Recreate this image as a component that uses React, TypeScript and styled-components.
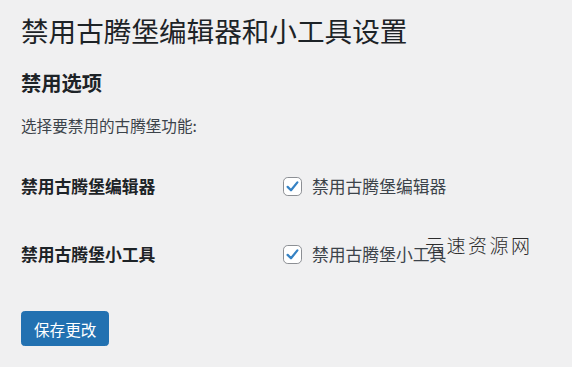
import React from 'react';
import styled, { createGlobalStyle } from 'styled-components';

const GlobalStyle = createGlobalStyle`
  html, body {
    margin: 0;
    padding: 0;
    background: #f0f0f1;
  }
  body {
    font-family: "Noto Sans CJK SC", "Noto Sans", sans-serif;
    color: #1d2327;
  }
`;

const Wrap = styled.div`
  position: relative;
  width: 572px;
  height: 367px;
  padding-left: 21px;
  box-sizing: border-box;
  overflow: hidden;
`;

const Title = styled.h1`
  margin: 12px 0 0;
  font-size: 27.6px;
  line-height: 36px;
  font-weight: 400;
  color: #1d2327;
`;

const SectionTitle = styled.h2`
  margin: 21px 0 0;
  font-size: 20.3px;
  line-height: 26px;
  font-weight: 700;
  color: #1d2327;
`;

const Intro = styled.p`
  margin: 19px 0 0;
  font-size: 15.6px;
  line-height: 22px;
  color: #3c434a;
`;

const FormTable = styled.div`
  margin-top: 16px;
  display: flex;
  flex-direction: column;
`;

const Row = styled.div`
  display: grid;
  grid-template-columns: 262px 1fr;
  align-items: center;
  height: 68px;
`;

const RowLabel = styled.div`
  font-size: 16.8px;
  line-height: 24px;
  font-weight: 700;
  color: #1d2327;
`;

const CheckLabel = styled.label`
  display: flex;
  align-items: center;
  gap: 10px;
  font-size: 16.8px;
  line-height: 24px;
  color: #3c434a;
`;

const Box = styled.span`
  width: 19px;
  height: 19px;
  box-sizing: border-box;
  border: 1.2px solid #8c8f94;
  border-radius: 4.8px;
  background: #fff;
  display: flex;
  align-items: center;
  justify-content: center;
`;

const SaveButton = styled.button`
  margin-top: 23px;
  height: 35px;
  padding: 0 12px;
  background: #2271b1;
  border: 1.2px solid #2271b1;
  border-radius: 3.6px;
  color: #fff;
  font-family: inherit;
  font-size: 15.6px;
  line-height: 32px;
`;

const Watermark = styled.div`
  position: absolute;
  left: 425px;
  top: 232px;
  font-size: 19px;
  line-height: 26px;
  letter-spacing: 2.5px;
  font-weight: 300;
  color: #2c2c2c;
`;

function Checkbox({ label }: { label: string }) {
  return (
    <CheckLabel>
      <Box>
        <svg width="15" height="15" viewBox="0 0 20 20">
          <path d="M3.5 10.5 L8 15 L16.5 4.5" fill="none" stroke="#3582c4" strokeWidth="3" strokeLinecap="round" strokeLinejoin="round" />
        </svg>
      </Box>
      {label}
    </CheckLabel>
  );
}

const options = [
  { title: '禁用古腾堡编辑器', label: '禁用古腾堡编辑器' },
  { title: '禁用古腾堡小工具', label: '禁用古腾堡小工具' },
];

export default function App() {
  return (
    <Wrap>
      <GlobalStyle />
      <Title>禁用古腾堡编辑器和小工具设置</Title>
      <SectionTitle>禁用选项</SectionTitle>
      <Intro>选择要禁用的古腾堡功能:</Intro>
      <FormTable>
        {options.map((o) => (
          <Row key={o.title}>
            <RowLabel>{o.title}</RowLabel>
            <Checkbox label={o.label} />
          </Row>
        ))}
      </FormTable>
      <SaveButton>保存更改</SaveButton>
      <Watermark>云速资源网</Watermark>
    </Wrap>
  );
}
